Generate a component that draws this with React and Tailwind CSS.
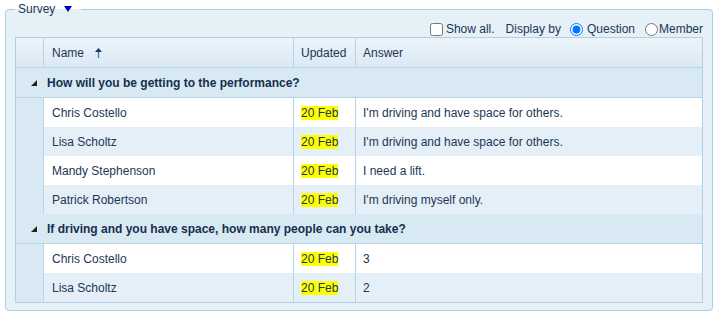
import { useState } from "react";

const groups = [
  {
    title: "How will you be getting to the performance?",
    rows: [
      { name: "Chris Costello", updated: "20 Feb", answer: "I'm driving and have space for others." },
      { name: "Lisa Scholtz", updated: "20 Feb", answer: "I'm driving and have space for others." },
      { name: "Mandy Stephenson", updated: "20 Feb", answer: "I need a lift." },
      { name: "Patrick Robertson", updated: "20 Feb", answer: "I'm driving myself only." },
    ],
  },
  {
    title: "If driving and you have space, how many people can you take?",
    rows: [
      { name: "Chris Costello", updated: "20 Feb", answer: "3" },
      { name: "Lisa Scholtz", updated: "20 Feb", answer: "2" },
    ],
  },
];

function SortUp() {
  return (
    <svg width="7" height="10" viewBox="0 0 7 10" className="ml-[11px] inline-block">
      <line x1="3.5" y1="3" x2="3.5" y2="10" stroke="#3f86c4" strokeWidth="1.4" />
      <polygon points="3.5,0 7,4 0,4" fill="#1b3a5c" />
    </svg>
  );
}

function GroupToggle() {
  return (
    <svg width="6" height="6" viewBox="0 0 6 6" className="shrink-0">
      <polygon points="6,0 6,6 0,6" fill="#222" />
    </svg>
  );
}

export default function App() {
  const [showAll, setShowAll] = useState(false);
  const [displayBy, setDisplayBy] = useState("question");

  return (
    <div className="font-['Liberation_Sans',Arial,sans-serif] text-[12px] text-[#1c3656] bg-white w-[716px] h-[313px]">
      <fieldset className="ml-[5px] w-[708px] rounded-[4px] border border-[#a9cee4] bg-[#e5f0f7] px-[9px] pt-[3px] pb-[7px]">
        <legend className="px-[3px] leading-[18px] flex items-center">
          <span className="text-[#1c3656]">Survey</span>
          <svg width="8" height="6" viewBox="0 0 8 6" className="ml-[9px] mr-[6px]">
            <polygon points="0,0 8,0 4,6" fill="#0000cc" />
          </svg>
        </legend>

        <div className="flex h-[16px] items-center justify-end">
          <label className="flex items-center">
            <input
              type="checkbox"
              checked={showAll}
              onChange={(e) => setShowAll(e.target.checked)}
              className="m-0 h-[13px] w-[13px]"
            />
            <span className="ml-[3px]">Show all.</span>
          </label>
          <span className="ml-[11px]">Display by</span>
          <label className="ml-[9px] flex items-center">
            <input
              type="radio"
              name="by"
              checked={displayBy === "question"}
              onChange={() => setDisplayBy("question")}
              className="m-0 h-[13px] w-[13px]"
            />
            <span className="ml-[4px]">Question</span>
          </label>
          <label className="ml-[10px] flex items-center">
            <input
              type="radio"
              name="by"
              checked={displayBy === "member"}
              onChange={() => setDisplayBy("member")}
              className="m-0 h-[13px] w-[13px]"
            />
            <span className="ml-[1px]">Member</span>
          </label>
        </div>

        <div className="border border-[#afd0e5] bg-[#d9e9f4]">
          <table className="w-full table-fixed border-separate border-spacing-0">
            <colgroup>
              <col className="w-[28px]" />
              <col className="w-[250px]" />
              <col className="w-[62px]" />
              <col />
            </colgroup>
            <thead>
              <tr className="bg-gradient-to-b from-[#ecf4fa] to-[#dae9f4]">
                <th className="h-[30px] border-r border-b border-[#b5d4e8] p-0" />
                <th className="h-[30px] border-r border-b border-[#b5d4e8] pl-[8px] text-left font-normal">
                  <span className="inline-flex items-center">
                    Name
                    <SortUp />
                  </span>
                </th>
                <th className="h-[30px] border-r border-b border-[#b5d4e8] pl-[7px] text-left font-normal">Updated</th>
                <th className="h-[30px] border-b border-[#b5d4e8] pl-[7px] text-left font-normal">Answer</th>
              </tr>
            </thead>
            {groups.map((g) => (
              <tbody key={g.title}>
                <tr>
                  <td colSpan={4} className="h-[30px] border-b border-[#b5d4e8] bg-[#d9e9f4] p-0">
                    <div className="flex items-center gap-[10px] pl-[15px] font-bold text-[#14304d]">
                      <GroupToggle />
                      {g.title}
                    </div>
                  </td>
                </tr>
                {g.rows.map((r, i) => (
                  <tr key={r.name} className={i % 2 === 0 ? "bg-white" : "bg-[#e4eff7]"}>
                    <td className="h-[29px] border-r border-[#b5d4e8] bg-[#d9e9f4] p-0" />
                    <td className="h-[29px] border-r border-[#b5d4e8] pl-[8px]">{r.name}</td>
                    <td className="h-[29px] border-r border-[#b5d4e8] pl-[7px]">
                      <span className="bg-[#ffff00]">{r.updated}</span>
                    </td>
                    <td className="h-[29px] pl-[7px]">{r.answer}</td>
                  </tr>
                ))}
              </tbody>
            ))}
          </table>
        </div>
      </fieldset>
    </div>
  );
}
